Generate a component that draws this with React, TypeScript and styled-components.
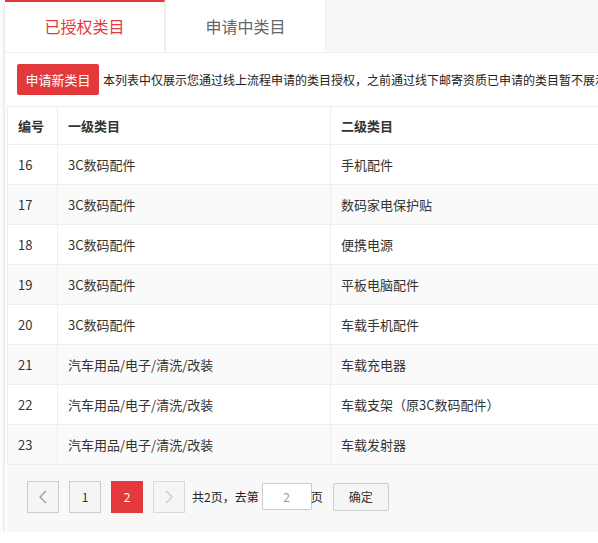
import styled, { createGlobalStyle } from "styled-components";

const GlobalStyle = createGlobalStyle`
  html, body {
    margin: 0;
    padding: 0;
    background: #fff;
    overflow: hidden;
  }
  body {
    font-family: "Noto Sans CJK SC", "Noto Sans", "Liberation Sans", sans-serif;
    color: #333;
  }
`;

interface Row {
  id: number;
  first: string;
  second: string;
}

const rows: Row[] = [
  { id: 16, first: "3C数码配件", second: "手机配件" },
  { id: 17, first: "3C数码配件", second: "数码家电保护贴" },
  { id: 18, first: "3C数码配件", second: "便携电源" },
  { id: 19, first: "3C数码配件", second: "平板电脑配件" },
  { id: 20, first: "3C数码配件", second: "车载手机配件" },
  { id: 21, first: "汽车用品/电子/清洗/改装", second: "车载充电器" },
  { id: 22, first: "汽车用品/电子/清洗/改装", second: "车载支架（原3C数码配件）" },
  { id: 23, first: "汽车用品/电子/清洗/改装", second: "车载发射器" },
];

const Chevron = ({ dir, color }: { dir: "left" | "right"; color: string }) => (
  <svg width="8" height="14" viewBox="0 0 8 14">
    <polyline
      points={dir === "left" ? "7,1 1,7 7,13" : "1,1 7,7 1,13"}
      fill="none"
      stroke={color}
      strokeWidth="1.2"
    />
  </svg>
);

export default function App() {
  return (
    <>
      <GlobalStyle />
      <Wrapper>
        <TabBar>
          <Tab $active>已授权类目</Tab>
          <Tab>申请中类目</Tab>
        </TabBar>
        <Panel>
          <Toolbar>
            <ApplyButton>申请新类目</ApplyButton>
            <Notice>本列表中仅展示您通过线上流程申请的类目授权，之前通过线下邮寄资质已申请的类目暂不展示</Notice>
          </Toolbar>
          <Table>
            <colgroup>
              <col style={{ width: 50 }} />
              <col style={{ width: 273 }} />
              <col />
            </colgroup>
            <thead>
              <tr>
                <Th>编号</Th>
                <Th>一级类目</Th>
                <Th>二级类目</Th>
              </tr>
            </thead>
            <tbody>
              {rows.map((r, i) => (
                <Tr key={r.id} $striped={i % 2 === 1}>
                  <Td>{r.id}</Td>
                  <Td>{r.first}</Td>
                  <Td>{r.second}</Td>
                </Tr>
              ))}
            </tbody>
          </Table>
          <Pager>
            <PageButton>
              <Chevron dir="left" color="#8a9bb0" />
            </PageButton>
            <PageButton>1</PageButton>
            <PageButton $current>2</PageButton>
            <PageButton $disabled>
              <Chevron dir="right" color="#c8c8c8" />
            </PageButton>
            <PagerText>共2页，去第</PagerText>
            <PageInput defaultValue="2" />
            <PagerText>页</PagerText>
            <ConfirmButton>确定</ConfirmButton>
          </Pager>
        </Panel>
      </Wrapper>
    </>
  );
}

const Wrapper = styled.div`
  margin-left: 5px;
  width: 1000px;
  background: #fff;
  box-shadow: 0 2px 5px rgba(0, 0, 0, 0.18);
`;

const TabBar = styled.div`
  display: flex;
  height: 52px;
  background: #f7f7f7;
`;

const Tab = styled.div<{ $active?: boolean }>`
  box-sizing: border-box;
  width: ${(p) => (p.$active ? "160px" : "161px")};
  display: flex;
  align-items: center;
  justify-content: center;
  background: #fff;
  font-size: 16px;
  color: ${(p) => (p.$active ? "#e4393c" : "#666")};
  border-top: 2px solid ${(p) => (p.$active ? "#e4393c" : "transparent")};
  border-right: 1px solid #eee;
  border-left: ${(p) => (p.$active ? "none" : "1px solid #eee")};
  padding-bottom: 2px;
`;

const Panel = styled.div`
  border-top: 1px solid #eee;
  padding-left: 2px;
  background: #fff;
`;

const Toolbar = styled.div`
  display: flex;
  align-items: center;
  gap: 4px;
  height: 53px;
  padding-left: 10px;
  white-space: nowrap;
  overflow: hidden;
`;

const ApplyButton = styled.button`
  flex: none;
  width: 82px;
  height: 31px;
  border: none;
  border-radius: 2px;
  background: #e4393c;
  color: #fff;
  font-family: inherit;
  font-size: 13px;
  padding: 0;
`;

const Notice = styled.span`
  font-size: 12px;
  color: #222;
`;

const Table = styled.table`
  width: 100%;
  border-collapse: collapse;
  table-layout: fixed;
  font-size: 13px;
  border-left: 1px solid #eee;
`;

const Th = styled.th`
  height: 37px;
  padding: 0 10px;
  text-align: left;
  font-weight: bold;
  color: #333;
  border: 1px solid #eee;
  border-left: none;
`;

const Tr = styled.tr<{ $striped?: boolean }>`
  background: ${(p) => (p.$striped ? "#fafafa" : "#fff")};
`;

const Td = styled.td`
  height: 39px;
  padding: 0 10px;
  color: #333;
  border: 1px solid #eee;
  border-left: none;
  white-space: nowrap;
`;

const Pager = styled.div`
  display: flex;
  align-items: center;
  height: 67px;
  box-sizing: border-box;
  padding: 0 0 4px 20px;
  background: #f8f8f8;
`;

const PageButton = styled.div<{ $current?: boolean; $disabled?: boolean }>`
  box-sizing: border-box;
  width: 32px;
  height: 32px;
  margin-right: 10px;
  display: flex;
  align-items: center;
  justify-content: center;
  font-size: 12px;
  color: ${(p) => (p.$current ? "#fff" : "#333")};
  background: ${(p) => (p.$current ? "#e4393c" : "#f5f5f5")};
  border: 1px solid ${(p) => (p.$current ? "#e4393c" : p.$disabled ? "#d8d8d8" : "#ccc")};
`;

const PagerText = styled.span`
  font-size: 12px;
  color: #222;
  margin-left: -3px;
  margin-right: 2px;
`;

const PageInput = styled.input`
  box-sizing: border-box;
  width: 50px;
  height: 27px;
  margin: 0 2px 0 1px;
  border: 1px solid #ccc;
  border-radius: 1px;
  text-align: center;
  font-family: inherit;
  font-size: 12px;
  color: #999;
  background: #fff;
  outline: none;
`;

const ConfirmButton = styled.button`
  box-sizing: border-box;
  width: 56px;
  height: 28px;
  margin-left: 8px;
  border: 1px solid #ccc;
  border-radius: 2px;
  background: #f5f5f5;
  font-family: inherit;
  font-size: 12px;
  color: #333;
`;
